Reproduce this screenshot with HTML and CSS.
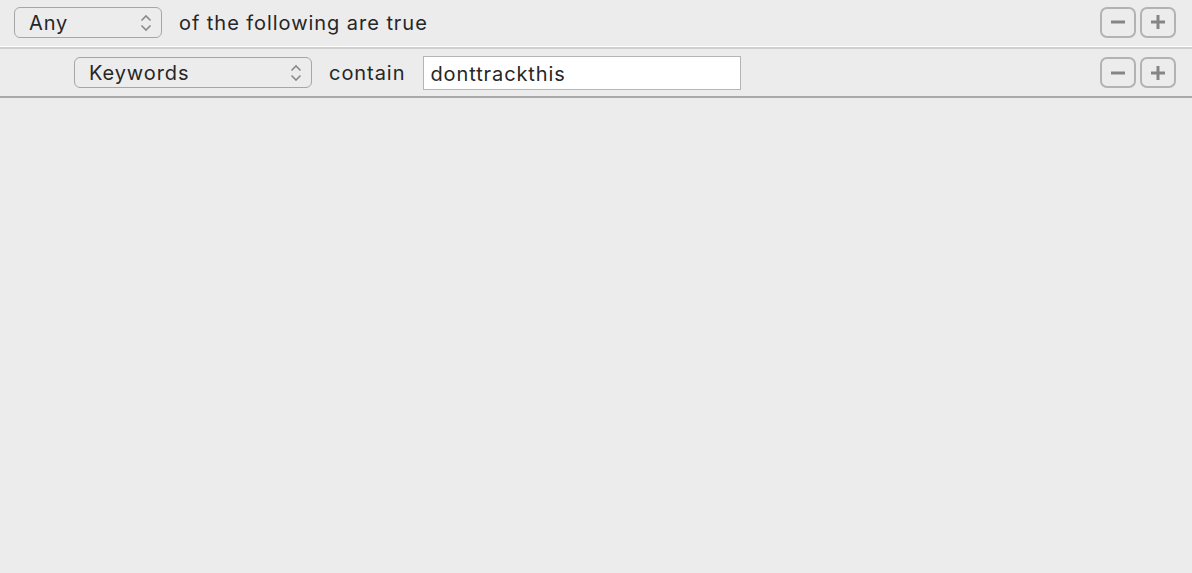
FILE: index.html
```html
<!DOCTYPE html>
<html lang="en">
<head>
  <meta charset="UTF-8" />
  <title>Rule editor</title>
  <link rel="stylesheet" href="styles.css">
</head>
<body>

  <div class="editor">
    <!-- header row -->
    <div class="row row-head">
      <div class="popup popup-any">
        <span>Any</span>
        <svg class="chev" width="12" height="20" viewBox="0 0 12 20">
          <path d="M1.5 7.5 L6 3 L10.5 7.5 M1.5 12.5 L6 17 L10.5 12.5" fill="none" stroke="#8a8a8a" stroke-width="1.6"/>
        </svg>
      </div>
      <span class="label">of the following are true</span>
      <div class="actions">
        <button class="btn">
          <svg width="20" height="20" viewBox="0 0 20 20"><rect x="3" y="8.5" width="14" height="3" fill="#858585"/></svg>
        </button>
        <button class="btn">
          <svg width="20" height="20" viewBox="0 0 20 20"><rect x="3" y="8.5" width="14" height="3" fill="#858585"/><rect x="8.5" y="3" width="3" height="14" fill="#858585"/></svg>
        </button>
      </div>
    </div>

    <!-- criteria row -->
    <div class="row row-rule">
      <div class="popup popup-field">
        <span>Keywords</span>
        <svg class="chev" width="12" height="20" viewBox="0 0 12 20">
          <path d="M1.5 7.5 L6 3 L10.5 7.5 M1.5 12.5 L6 17 L10.5 12.5" fill="none" stroke="#8a8a8a" stroke-width="1.6"/>
        </svg>
      </div>
      <span class="label">contain</span>
      <input class="value" type="text" value="donttrackthis" />
      <div class="actions">
        <button class="btn">
          <svg width="20" height="20" viewBox="0 0 20 20"><rect x="3" y="8.5" width="14" height="3" fill="#858585"/></svg>
        </button>
        <button class="btn">
          <svg width="20" height="20" viewBox="0 0 20 20"><rect x="3" y="8.5" width="14" height="3" fill="#858585"/><rect x="8.5" y="3" width="3" height="14" fill="#858585"/></svg>
        </button>
      </div>
    </div>
  </div>

</body>
</html>
```

FILE: styles.css
```css
body {
  margin: 0;
  background: #ececec;
  font-family: Inter, "Noto Sans", sans-serif;
  color: #262626;
  height: 573px;
  overflow: hidden;
}

.row {
  display: flex;
  align-items: center;
  box-sizing: border-box;
}

.row-head {
  height: 49px;
  padding: 0 16px 3px 14px;
  border-bottom: 2px solid #cfcfcf;
  box-shadow: inset 0 -1px 0 #ffffff;
}

.row-rule {
  height: 49px;
  padding: 0 16px 0 74px;
  border-bottom: 2px solid #a9a9a9;
}

.popup {
  height: 31px;
  box-sizing: border-box;
  border: 1.5px solid #a6a6a6;
  border-radius: 6px;
  display: flex;
  align-items: center;
  justify-content: space-between;
  padding: 1px 9px 0 14px;
  font-size: 20px;
  letter-spacing: 0.9px;
}

.popup-any {
  width: 148px;
}

.popup-field {
  width: 238px;
}

.chev {
  display: block;
}

.label {
  font-size: 20px;
  letter-spacing: 0.95px;
  margin-left: 17px;
  padding-top: 1px;
}

.value {
  margin-left: 18px;
  width: 318px;
  height: 34px;
  box-sizing: border-box;
  border: 1px solid #b5b5b5;
  background: #fff;
  font-family: inherit;
  font-size: 20px;
  letter-spacing: 0.9px;
  color: #262626;
  padding: 3px 6px 0;
  outline: none;
}

.actions {
  margin-left: auto;
  display: flex;
  gap: 4px;
}

.btn {
  width: 36px;
  height: 31px;
  box-sizing: border-box;
  border: 2px solid #b3b3b3;
  border-radius: 7px;
  background: #ececec;
  padding: 0;
  display: flex;
  align-items: center;
  justify-content: center;
}
```
